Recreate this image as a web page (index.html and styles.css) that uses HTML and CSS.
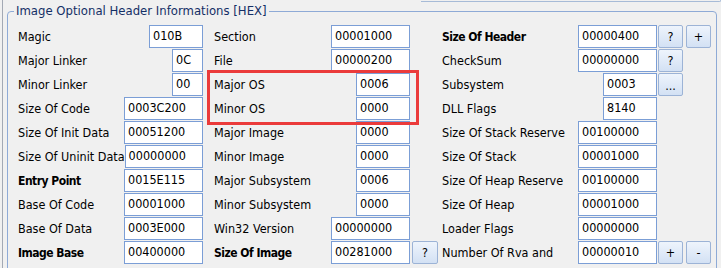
FILE: index.html
```html
<!DOCTYPE html>
<html>
<head>
<meta charset="utf-8">
<link rel="stylesheet" href="styles.css">
</head>
<body>
<div class="frame">
  <div class="prev"></div>
  <fieldset class="group">
    <legend>Image Optional Header Informations [HEX]</legend>
    <div class="cols">
      <div class="col c1">
        <div class="row"><div class="field"><span class="lbl">Magic</span><span class="box w4">010B</span></div></div>
        <div class="row"><div class="field"><span class="lbl">Major Linker</span><span class="box w2">0C</span></div></div>
        <div class="row"><div class="field"><span class="lbl">Minor Linker</span><span class="box w2">00</span></div></div>
        <div class="row"><div class="field"><span class="lbl">Size Of Code</span><span class="box w8">0003C200</span></div></div>
        <div class="row"><div class="field"><span class="lbl">Size Of Init Data</span><span class="box w8">00051200</span></div></div>
        <div class="row"><div class="field"><span class="lbl">Size Of Uninit Data</span><span class="box w8">00000000</span></div></div>
        <div class="row"><div class="field"><span class="lbl b">Entry Point</span><span class="box w8">0015E115</span></div></div>
        <div class="row"><div class="field"><span class="lbl">Base Of Code</span><span class="box w8">00001000</span></div></div>
        <div class="row"><div class="field"><span class="lbl">Base Of Data</span><span class="box w8">0003E000</span></div></div>
        <div class="row"><div class="field"><span class="lbl b">Image Base</span><span class="box w8">00400000</span></div></div>
      </div>
      <div class="col c2">
        <div class="row"><div class="field"><span class="lbl">Section</span><span class="box w8">00001000</span></div></div>
        <div class="row"><div class="field"><span class="lbl">File</span><span class="box w8">00000200</span></div></div>
        <div class="hl">
          <div class="row"><div class="field"><span class="lbl">Major OS</span><span class="box w4">0006</span></div></div>
          <div class="row"><div class="field"><span class="lbl">Minor OS</span><span class="box w4">0000</span></div></div>
        </div>
        <div class="row"><div class="field"><span class="lbl">Major Image</span><span class="box w4">0000</span></div></div>
        <div class="row"><div class="field"><span class="lbl">Minor Image</span><span class="box w4">0000</span></div></div>
        <div class="row"><div class="field"><span class="lbl">Major Subsystem</span><span class="box w4">0006</span></div></div>
        <div class="row"><div class="field"><span class="lbl">Minor Subsystem</span><span class="box w4">0000</span></div></div>
        <div class="row"><div class="field"><span class="lbl">Win32 Version</span><span class="box w8">00000000</span></div></div>
        <div class="row"><div class="field"><span class="lbl b">Size Of Image</span><span class="box w8">00281000</span></div><span class="btn bq">?</span></div>
      </div>
      <div class="col c3">
        <div class="row"><div class="field"><span class="lbl b">Size Of Header</span><span class="box w8">00000400</span></div><span class="btn">?</span><span class="btn b2">+</span></div>
        <div class="row"><div class="field"><span class="lbl">CheckSum</span><span class="box w8">00000000</span></div><span class="btn">?</span></div>
        <div class="row"><div class="field"><span class="lbl">Subsystem</span><span class="box w4">0003</span></div><span class="btn dots">...</span></div>
        <div class="row"><div class="field"><span class="lbl">DLL Flags</span><span class="box w4">8140</span></div></div>
        <div class="row"><div class="field"><span class="lbl">Size Of Stack Reserve</span><span class="box w8">00100000</span></div></div>
        <div class="row"><div class="field"><span class="lbl">Size Of Stack</span><span class="box w8">00001000</span></div></div>
        <div class="row"><div class="field"><span class="lbl">Size Of Heap Reserve</span><span class="box w8">00100000</span></div></div>
        <div class="row"><div class="field"><span class="lbl">Size Of Heap</span><span class="box w8">00001000</span></div></div>
        <div class="row"><div class="field"><span class="lbl">Loader Flags</span><span class="box w8">00000000</span></div></div>
        <div class="row"><div class="field"><span class="lbl">Number Of Rva and</span><span class="box w8">00000010</span></div><span class="btn">+</span><span class="btn b2">-</span></div>
      </div>
    </div>
  </fieldset>
</div>
</body>
</html>
```
FILE: styles.css
```css
* { box-sizing: border-box; }
html, body {
  margin: 0;
  padding: 0;
  background: #f0f0f0;
  width: 721px;
  height: 268px;
  overflow: hidden;
}
body {
  font-family: "DejaVu Sans Condensed", "DejaVu Sans", sans-serif;
  font-stretch: condensed;
  font-size: 12.5px;
  color: #000;
}
.frame {
  margin-left: 2px;
  height: 268px;
  border-left: 1px solid #a3a9b4;
  padding-left: 4px;
}
.prev {
  margin-left: 414px;
  width: 300px;
  height: 2px;
  border-bottom: 1px solid #a7bbd7;
  border-right: 1px solid #a7bbd7;
  border-bottom-right-radius: 4px;
}
.group {
  margin: 0;
  width: 710px;
  height: 270px;
  border: 1px solid #8eaad6;
  border-radius: 4px;
  padding: 0 0 0 10px;
  margin-top: 1px;
}
.group legend {
  padding: 0 2px;
  margin-left: -4px;
  color: #142f66;
  font-size: 13px;
  line-height: 16px;
}
.cols {
  display: flex;
  margin-top: 6px;
}
.col { display: flex; flex-direction: column; }
.c1 { width: 185px; }
.c2 { width: 224px; margin-left: 11px; }
.c3 { width: 269px; margin-left: 4px; }
.row {
  display: flex;
  align-items: center;
  height: 23px;
  margin-bottom: 1px;
}
.field { display: flex; align-items: center; height: 23px; }
.c1 .field { width: 185px; }
.c2 .field { width: 196px; }
.c3 .field { width: 215px; }
.lbl { flex: 1; white-space: nowrap; }
.lbl.b { font-weight: bold; font-size: 12px; letter-spacing: -0.5px; }
.box {
  height: 23px;
  background: #fff;
  border: 1px solid #7b9ed6;
  padding-left: 3px;
  line-height: 20px;
  white-space: nowrap;
}
.w2 { width: 31px; }
.w4 { width: 54px; }
.w8 { width: 79px; }
.btn {
  width: 25px;
  height: 23px;
  margin-left: 1px;
  border: 1px solid #9cb3d6;
  border-radius: 2px;
  background: linear-gradient(#eef4fc, #d3e1f4);
  text-align: center;
  line-height: 21px;
  color: #000;
}
.btn.bq { width: 26px; margin-left: 2px; }
.btn.b2 { margin-left: 3px; }
.btn.dots { line-height: 24px; }
.hl {
  position: relative;
}
.hl::after {
  content: "";
  position: absolute;
  left: -7px;
  top: -3px;
  width: 206px;
  height: 49px;
  border: 3px solid #eb3b3b;
  pointer-events: none;
}
```
